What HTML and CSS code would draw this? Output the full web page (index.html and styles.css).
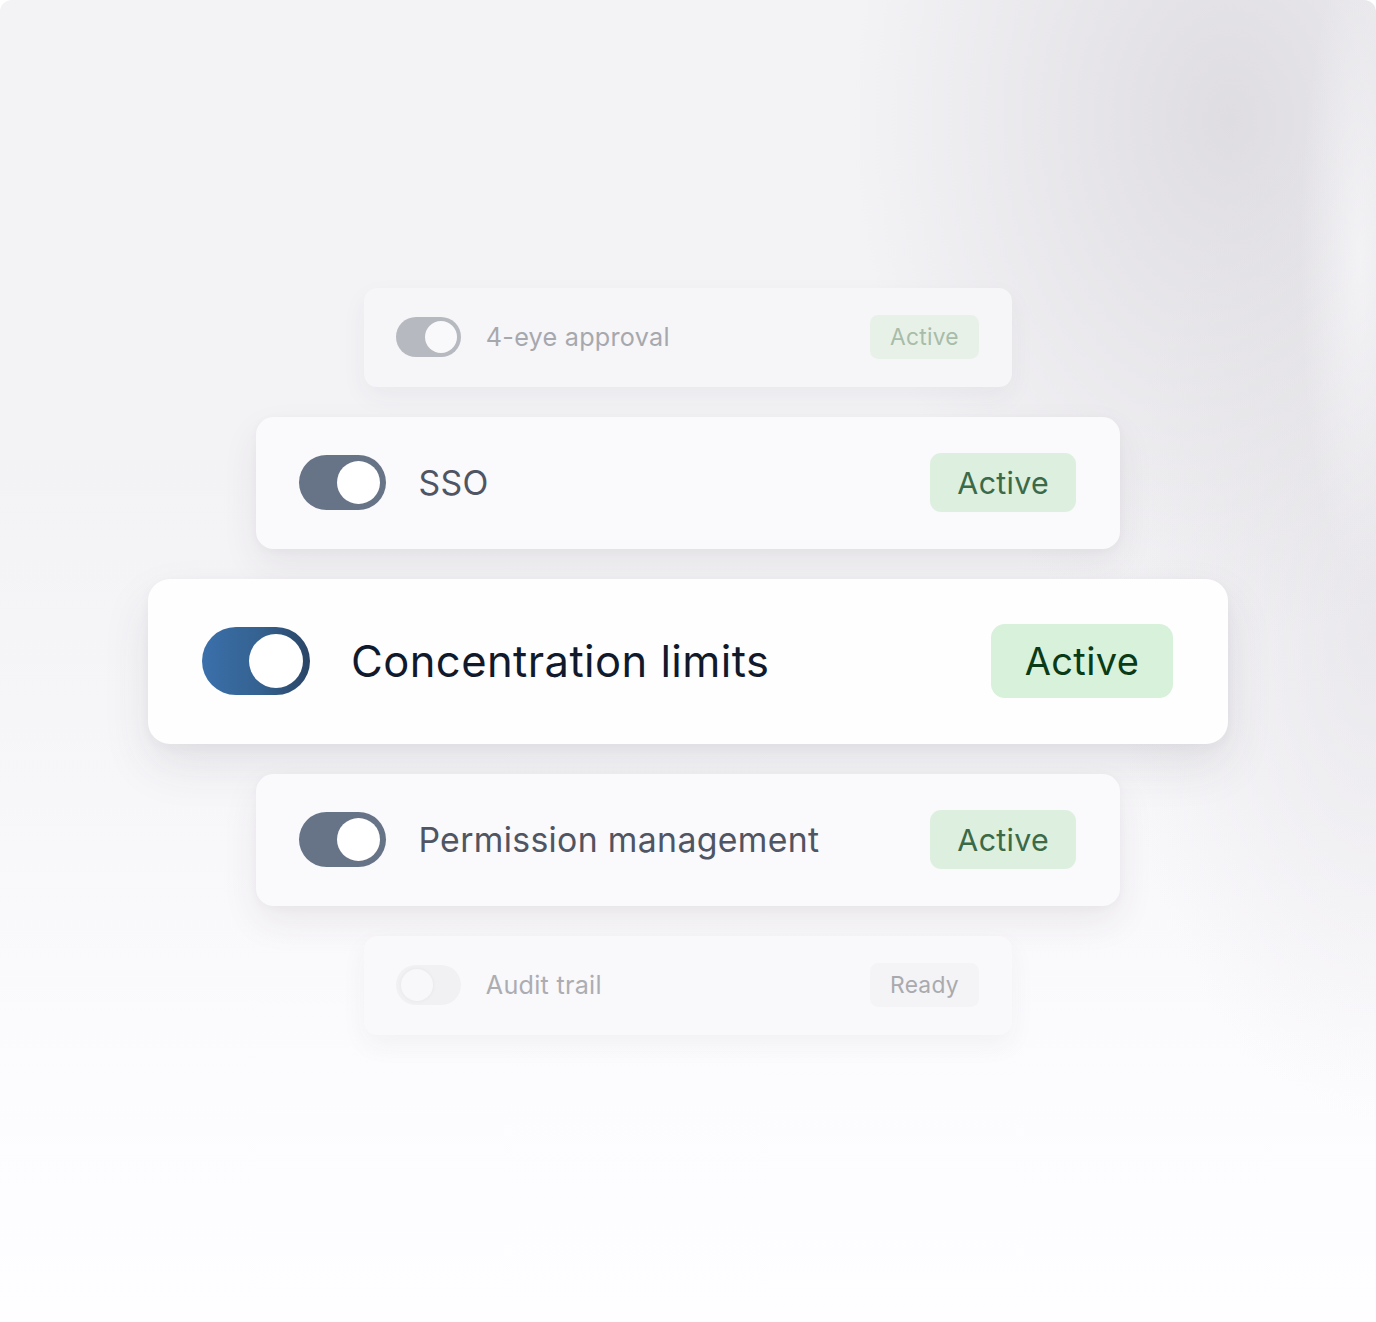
FILE: index.html
```html
<!DOCTYPE html>
<html lang="en">
<head>
<meta charset="utf-8">
<title>Controls</title>
<link rel="stylesheet" href="styles.css">
</head>
<body>
<main class="stage">
  <div class="stack">
    <div class="card card-far">
      <span class="toggle toggle-faint"><span class="knob"></span></span>
      <span class="label">4-eye approval</span>
      <span class="badge">Active</span>
    </div>
    <div class="card card-near">
      <span class="toggle toggle-slate"><span class="knob"></span></span>
      <span class="label">SSO</span>
      <span class="badge">Active</span>
    </div>
    <div class="card card-main">
      <span class="toggle toggle-blue"><span class="knob"></span></span>
      <span class="label">Concentration limits</span>
      <span class="badge">Active</span>
    </div>
    <div class="card card-near">
      <span class="toggle toggle-slate"><span class="knob"></span></span>
      <span class="label">Permission management</span>
      <span class="badge">Active</span>
    </div>
    <div class="card card-far card-off">
      <span class="toggle toggle-off"><span class="knob"></span></span>
      <span class="label">Audit trail</span>
      <span class="badge badge-ready">Ready</span>
    </div>
  </div>
</main>
</body>
</html>
```

FILE: styles.css
```css
* { box-sizing: border-box; }

html, body {
  margin: 0;
  padding: 0;
  background: #ffffff;
}

body {
  font-family: Inter, "Noto Sans", "Liberation Sans", sans-serif;
}

.stage {
  width: 1376px;
  height: 1322px;
  border-radius: 12px 12px 0 0;
  overflow: hidden;
  display: flex;
  align-items: center;
  justify-content: center;
  background:
    radial-gradient(ellipse 60px 320px at 1360px 260px, rgba(246, 245, 248, 0.8), rgba(246, 245, 248, 0) 100%),
    radial-gradient(ellipse 380px 520px at 1230px 120px, rgba(214, 212, 217, 0.7), rgba(214, 212, 217, 0) 100%),
    radial-gradient(ellipse 260px 500px at 1376px 620px, rgba(222, 220, 225, 0.5), rgba(222, 220, 225, 0) 100%),
    linear-gradient(180deg, #f3f2f5 0%, #f3f2f5 35%, #f7f6f9 60%, #fcfbfd 82%, #fefdff 100%);
}

.stack {
  display: flex;
  flex-direction: column;
  align-items: center;
  gap: 30px;
}

.card {
  --s: 1;
  width: calc(1080px * var(--s));
  height: calc(165px * var(--s));
  padding: 0 calc(55px * var(--s)) 0 calc(54px * var(--s));
  border-radius: calc(22px * var(--s));
  display: flex;
  align-items: center;
  background: #ffffff;
}

.card-main {
  --s: 1;
  background: #fefeff;
  box-shadow: 0 22px 48px rgba(60, 55, 70, 0.10), 0 4px 12px rgba(60, 55, 70, 0.04);
}

.card-near {
  --s: 0.8;
  background: #faf9fc;
  box-shadow: 0 16px 36px rgba(60, 55, 70, 0.08), 0 2px 8px rgba(60, 55, 70, 0.03);
}

.card-far {
  --s: 0.6;
  background: #f6f5f8;
  box-shadow: 0 10px 26px rgba(60, 55, 70, 0.05);
}

.card-off {
  background: #f9f8fb;
}

.toggle {
  flex: none;
  width: calc(108px * var(--s));
  height: calc(68px * var(--s));
  border-radius: 999px;
  padding: calc(7px * var(--s));
  display: flex;
  justify-content: flex-end;
  align-items: center;
}

.knob {
  width: calc(54px * var(--s));
  height: calc(54px * var(--s));
  border-radius: 50%;
  background: #ffffff;
}

.toggle-blue {
  background: linear-gradient(90deg, #3b70ab 0%, #34618f 55%, #2a4566 100%);
}

.toggle-slate {
  background: #677386;
}

.toggle-faint {
  background: #b6b9c0;
}
.toggle-faint .knob {
  background: #f9f9fb;
}

.toggle-off {
  background: #f1f0f3;
  justify-content: flex-start;
}
.toggle-off .knob {
  background: #f8f7fa;
  box-shadow: 0 0 4px rgba(0, 0, 0, 0.05);
}

.label {
  flex: 1;
  margin-left: calc(41px * var(--s));
  font-size: calc(42px * var(--s));
  font-weight: 400;
  letter-spacing: 0.01em;
  color: #111a2c;
  white-space: nowrap;
}

.card-main .label { font-size: 43.5px; }
.card-near .label { color: #4f5562; font-size: 33.8px; }
.card-far .label { color: #a6a8ae; }
.card-off .label { color: #acadb2; }

.badge {
  flex: none;
  width: calc(182px * var(--s));
  height: calc(74px * var(--s));
  border-radius: calc(14px * var(--s));
  display: flex;
  align-items: center;
  justify-content: center;
  font-size: calc(38px * var(--s));
  color: #0b3a16;
  background: #d7f1da;
  letter-spacing: 0.01em;
}

.card-near .badge {
  background: #ddf0df;
  color: #3c6a48;
}

.card-far .badge {
  background: #e7f1e8;
  color: #a7bca9;
}

.card-off .badge-ready {
  background: #f4f3f6;
  color: #a9aaae;
}
```
